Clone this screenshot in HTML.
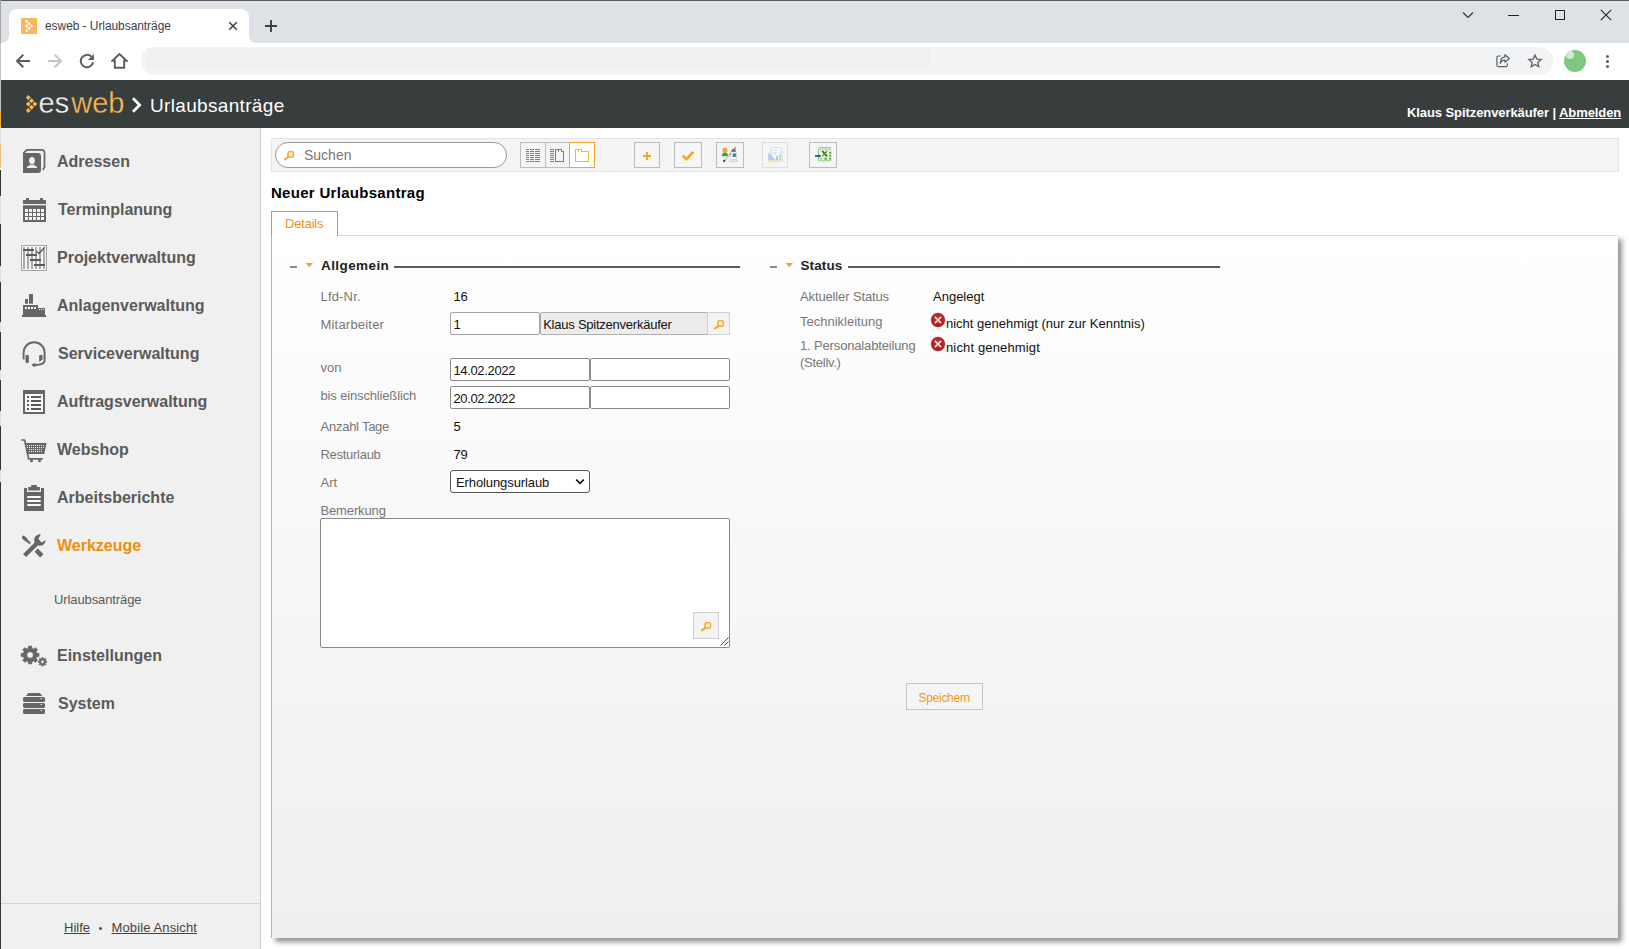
<!DOCTYPE html>
<html lang="de">
<head>
<meta charset="utf-8">
<title>esweb - Urlaubsanträge</title>
<style>
*{box-sizing:border-box;margin:0;padding:0}
html,body{width:1629px;height:949px;overflow:hidden;background:#fff}
body{position:relative;font-family:"Liberation Sans",sans-serif;font-size:13px;color:#111}
.a{position:absolute}
.t{position:absolute;white-space:nowrap;line-height:20px}
/* browser chrome */
#tabstrip{left:0;top:0;width:1629px;height:43px;background:#dee1e6;border-top:1px solid #5a5a5a}
#tab{left:9px;top:9px;width:240px;height:34px;background:#fff;border-radius:8px 8px 0 0}
#navbar{left:0;top:43px;width:1629px;height:37px;background:#fff}
#omni{left:141px;top:47px;width:1412px;height:28px;border-radius:14px;background:#f1f3f4}
/* app header */
#hdr{left:1px;top:80px;width:1628px;height:48px;background:#383d3d}
/* sidebar */
#side{left:1px;top:128px;width:260px;height:821px;background:#f0f0f0;border-right:1px solid #cfcfcf}
.nav{position:absolute;left:57px;font-weight:bold;font-size:16px;color:#5a5a5a;white-space:nowrap;line-height:20px}
.ico{position:absolute}
#sidefoot{left:1px;top:903px;width:259px;height:1px;background:#d2d2d2}
/* main */
#tbar{left:271px;top:138px;width:1348px;height:34px;background:#f4f4f4;border:1px solid #e4e4e4}
#search{left:275px;top:142px;width:232px;height:26px;border:1px solid #9a9a9a;border-radius:13px;background:#fff}
.btn{position:absolute;top:142px;height:26px;border:1px solid #bcbcbc;background:#f5f5f5}
#panel{left:271px;top:235px;width:1347px;height:703px;border:1px solid #dcdcdc;border-left-color:#b4b4b4;border-right:none;border-bottom:none;background:linear-gradient(#ffffff 0%,#fafafa 30%,#f4f4f4 65%,#efefef 100%);box-shadow:4px 4px 5px rgba(0,0,0,.42)}
#dtab{left:271px;top:211px;width:67px;height:25px;border:1px solid #f29400;border-bottom:none;background:#fff}
.lbl{color:#777}
.inp{position:absolute;height:23px;border:1px solid #8a8a8a;background:#fff;border-radius:2px}
.hr{position:absolute;height:2px;background:#5c5c5c;top:266px}
.seg{font-family:"Liberation Sans",sans-serif}
</style>
</head>
<body>
<!-- ===== browser chrome ===== -->
<div id="tabstrip" class="a"></div>
<div id="tab" class="a"></div>
<svg class="a" style="left:1px;top:35px" width="8" height="8" viewBox="0 0 8 8"><path d="M0 8h8V0C8 5 5 8 0 8z" fill="#fff"/></svg>
<svg class="a" style="left:249px;top:35px" width="8" height="8" viewBox="0 0 8 8"><path d="M8 8H0V0c0 5 3 8 8 8z" fill="#fff"/></svg>
<div id="navbar" class="a"></div>
<div id="omni" class="a"></div>
<div class="a" style="left:146px;top:48px;width:784px;height:21px;background:#f0f0f0"></div>
<svg class="a" style="left:21px;top:18px" width="16" height="16" viewBox="0 0 16 16"><rect width="16" height="16" fill="#f8b75a"/><g fill="#fff"><rect x="4.4" y="2.2" width="2.3" height="2.3" transform="rotate(45 5.55 3.35)"/><rect x="4.4" y="6.85" width="2.3" height="2.3" transform="rotate(45 5.55 8)"/><rect x="4.4" y="11.5" width="2.3" height="2.3" transform="rotate(45 5.55 12.65)"/><rect x="6.9" y="4.5" width="2.3" height="2.3" transform="rotate(45 8.05 5.65)"/><rect x="6.9" y="9.2" width="2.3" height="2.3" transform="rotate(45 8.05 10.35)"/><rect x="9.4" y="6.85" width="2.3" height="2.3" transform="rotate(45 10.55 8)"/></g></svg>
<span class="t" id="tabtitle" style="left:45px;top:16px;letter-spacing:-0.07px;font-size:12px;color:#3c4043">esweb - Urlaubsanträge</span>
<svg class="a" style="left:228px;top:21px" width="10" height="10" viewBox="0 0 10 10"><path d="M1.2 1.2L8.8 8.8M8.8 1.2L1.2 8.8" stroke="#3c4043" stroke-width="1.5" fill="none"/></svg>
<svg class="a" style="left:264px;top:19px" width="14" height="14" viewBox="0 0 14 14"><path d="M7 1v12M1 7h12" stroke="#3c4043" stroke-width="1.9" fill="none"/></svg>
<!-- window controls -->
<svg class="a" style="left:1462px;top:10px" width="12" height="10" viewBox="0 0 12 10"><path d="M1 2.5l5 5 5-5" stroke="#333" stroke-width="1.2" fill="none"/></svg>
<div class="a" style="left:1508px;top:15px;width:11px;height:1px;background:#222"></div>
<div class="a" style="left:1555px;top:10px;width:10px;height:10px;border:1px solid #222"></div>
<svg class="a" style="left:1600px;top:9px" width="12" height="12" viewBox="0 0 12 12"><path d="M0.8 0.8L11.2 11.2M11.2 0.8L0.8 11.2" stroke="#222" stroke-width="1.1" fill="none"/></svg>
<!-- nav icons -->
<svg class="a" style="left:15px;top:53px" width="16" height="16" viewBox="0 0 16 16"><path d="M15 8H2.5M8.3 1.7L2 8l6.3 6.3" stroke="#5a5e64" stroke-width="2" fill="none"/></svg>
<svg class="a" style="left:47px;top:53px" width="16" height="16" viewBox="0 0 16 16"><path d="M1 8h12.5M7.7 1.7l6.3 6.3-6.3 6.3" stroke="#c3c5c8" stroke-width="2" fill="none"/></svg>
<svg class="a" style="left:79px;top:53px" width="16" height="16" viewBox="0 0 16 16"><path d="M14.1 9.2A6.2 6.2 0 1 1 12.3 3.6" stroke="#5a5e64" stroke-width="2" fill="none"/><path d="M14.9 0.9v6H8.9z" fill="#5a5e64"/></svg>
<svg class="a" style="left:111px;top:52px" width="17" height="17" viewBox="0 0 17 17"><path d="M8.5 2L1.4 8.7h2.4v7h9.4v-7h2.4z" stroke="#5a5e64" stroke-width="1.9" fill="none" stroke-linejoin="miter"/></svg>
<!-- omnibox right icons -->
<svg class="a" style="left:1495px;top:53px" width="16" height="16" viewBox="0 0 17 17"><path d="M6.2 3.2H3.6a1.6 1.6 0 0 0-1.6 1.6v8a1.6 1.6 0 0 0 1.6 1.6h8a1.6 1.6 0 0 0 1.6-1.6V11" stroke="#5f6368" stroke-width="1.3" fill="none"/><path d="M10.6 1.8l4.6 4-4.6 4V7.5C8 7.5 6.4 8.6 5.6 11 5.6 7 7.6 4.6 10.6 4.2z" stroke="#5f6368" stroke-width="1.3" fill="none" stroke-linejoin="round"/></svg>
<svg class="a" style="left:1527px;top:53px" width="16" height="16" viewBox="0 0 18 18"><path d="M9 2.3l2 4.5 4.9.5-3.7 3.3 1.1 4.8L9 12.9l-4.3 2.5 1.1-4.8L2.1 7.3l4.9-.5z" stroke="#5f6368" stroke-width="1.5" fill="none" stroke-linejoin="miter"/></svg>
<div class="a" style="left:1564px;top:50px;width:22px;height:22px;border-radius:11px;background:#81c784"></div>
<div class="a" style="left:1566px;top:51px;width:8px;height:8px;border-radius:4px;background:#cfe8d0"></div>
<div class="a" style="left:1606px;top:55px;width:3px;height:3px;border-radius:2px;background:#5f6368;box-shadow:0 5px 0 #5f6368,0 10px 0 #5f6368"></div>

<!-- ===== app header ===== -->
<div id="hdr" class="a"></div>
<svg class="a" style="left:24px;top:94px" width="14" height="20" viewBox="0 0 14 20"><g fill="#f9b755"><path d="M1.85 3.5L4.3 1.05L6.75 3.5L4.3 5.95z"/><path d="M1.85 10L4.3 7.55L6.75 10L4.3 12.45z"/><path d="M1.85 16.5L4.3 14.05L6.75 16.5L4.3 18.95z"/><path d="M5.10 6.75L7.55 4.30L10.00 6.75L7.55 9.20z"/><path d="M5.10 13.25L7.55 10.80L10.00 13.25L7.55 15.70z"/><path d="M8.35 10L10.8 7.55L13.25 10L10.8 12.45z"/></g></svg>
<span class="t" id="logo1" style="left:38.6px;top:86px;font-size:29px;line-height:34px;color:#f4f4f4;-webkit-text-stroke:0.3px #383d3d">es</span>
<span class="t" id="logo2" style="left:71.3px;top:86px;font-size:29px;line-height:34px;color:#f9b755;-webkit-text-stroke:0.3px #383d3d">web</span>
<svg class="a" style="left:130px;top:96px" width="14" height="18" viewBox="130 96 14 18"><path d="M133 98.3l6.6 6.7-6.6 6.7" stroke="#fff" stroke-width="2.8" fill="none"/></svg>
<span class="t" id="hdrtitle" style="left:150px;top:94px;font-size:19px;line-height:24px;letter-spacing:0.33px;color:#fff">Urlaubsanträge</span>
<span class="t" id="hdruser" style="left:1407px;top:103px;letter-spacing:-0.085px;font-size:13px;font-weight:bold;color:#fff">Klaus Spitzenverkäufer | <span style="text-decoration:underline">Abmelden</span></span>

<!-- ===== sidebar ===== -->
<div id="side" class="a"></div>
<svg class="a" style="left:16px;top:140px" width="40" height="590" viewBox="16 140 40 590"><path d="M23 153h15a3 3 0 0 1 3 3v14a3 3 0 0 1-3 3H23z" fill="#666"/>
<path d="M23.3 153.4l3.6-3.6h14.6a3 3 0 0 1 3 3v14.4l-1.6 2.6" fill="none" stroke="#666" stroke-width="1.7"/>
<ellipse cx="32" cy="160.6" rx="2.9" ry="3.7" fill="#f0f0f0"/>
<path d="M26.8 168c0-1.4 1.2-2 4-3.3h2.4c2.8 1.3 4 1.9 4 3.3z" fill="#f0f0f0"/>
<path d="M23 200h3v-2h3v2h11v-2h3v2h3v4H23z" fill="#666"/><path d="M23 205.3h23V222H23z" fill="#666"/><rect x="25" y="209" width="3" height="3" fill="#f7f7f7"/><rect x="29" y="209" width="3" height="3" fill="#f7f7f7"/><rect x="33" y="209" width="3" height="3" fill="#f7f7f7"/><rect x="37" y="209" width="3" height="3" fill="#f7f7f7"/><rect x="41" y="209" width="3" height="3" fill="#f7f7f7"/><rect x="25" y="213" width="3" height="3" fill="#f7f7f7"/><rect x="29" y="213" width="3" height="3" fill="#f7f7f7"/><rect x="33" y="213" width="3" height="3" fill="#f7f7f7"/><rect x="37" y="213" width="3" height="3" fill="#f7f7f7"/><rect x="41" y="213" width="3" height="3" fill="#f7f7f7"/><rect x="25" y="217" width="3" height="3" fill="#f7f7f7"/><rect x="29" y="217" width="3" height="3" fill="#f7f7f7"/><rect x="33" y="217" width="3" height="3" fill="#f7f7f7"/><rect x="37" y="217" width="3" height="3" fill="#f7f7f7"/><rect x="41" y="217" width="3" height="3" fill="#f7f7f7"/>
<rect x="21.5" y="245.5" width="25" height="25" fill="#f6f6f6" stroke="#a3a3a3"/><rect x="23" y="247" width="2" height="22" fill="#ababab"/><rect x="27" y="247" width="2" height="22" fill="#ababab"/><rect x="31" y="247" width="2" height="22" fill="#ababab"/><rect x="35" y="247" width="2" height="22" fill="#ababab"/><rect x="39" y="247" width="2" height="22" fill="#ababab"/><rect x="43" y="247" width="2" height="22" fill="#ababab"/><rect x="23" y="249" width="11" height="2" fill="#5a5a5a"/><rect x="26" y="254" width="11" height="2" fill="#5a5a5a"/><rect x="30" y="259" width="11" height="2" fill="#5a5a5a"/><rect x="34" y="264" width="11" height="2" fill="#5a5a5a"/><path d="M36.2 251.2l2.8 2.3 5.6-6" fill="none" stroke="#5a5a5a" stroke-width="1.4"/>
<path d="M22 315h1v-10h15v3h7v7h1v2H22z" fill="#666"/><rect x="25" y="299" width="3" height="4.7" fill="#666"/><rect x="29" y="294" width="4" height="9.7" fill="#666"/><rect x="25" y="307" width="2" height="2" fill="#f7f7f7"/><rect x="28" y="307" width="2" height="2" fill="#f7f7f7"/><rect x="31" y="307" width="2" height="2" fill="#f7f7f7"/><rect x="34" y="307" width="2" height="2" fill="#f7f7f7"/><rect x="39" y="309" width="1" height="1" fill="#f7f7f7"/><rect x="41" y="309" width="1" height="1" fill="#f7f7f7"/><rect x="43" y="309" width="1" height="1" fill="#f7f7f7"/>
<path d="M23.6 358.5v-6a10.5 10.3 0 0 1 21 0v8c0 3-4 4.3-9.5 4.6" fill="none" stroke="#666" stroke-width="1.9" stroke-linecap="round"/>
<rect x="25.6" y="355" width="3.2" height="8" rx="1" fill="#666"/><path d="M39.2 356a1 1 0 0 1 1-1h2.2v4.8l-3.2 2z" fill="#666"/><rect x="42.4" y="355" width="1.4" height="5" fill="#aaa"/><rect x="24.4" y="355" width="1.3" height="5" fill="#aaa"/>
<ellipse cx="34.3" cy="365" rx="2.3" ry="1.7" fill="#666"/>
<path d="M23 390h22v24H23z M25 394v18h18v-18z" fill="#666" fill-rule="evenodd"/><rect x="25" y="394" width="18" height="18" fill="#fafafa"/><rect x="27" y="396" width="2" height="2" fill="#5a5a5a"/><rect x="31" y="396" width="10" height="2" fill="#5a5a5a"/><rect x="27" y="400" width="2" height="2" fill="#5a5a5a"/><rect x="31" y="400" width="10" height="2" fill="#5a5a5a"/><rect x="27" y="404" width="2" height="2" fill="#5a5a5a"/><rect x="31" y="404" width="10" height="2" fill="#5a5a5a"/><rect x="27" y="408" width="2" height="2" fill="#5a5a5a"/><rect x="31" y="408" width="10" height="2" fill="#5a5a5a"/>
<path d="M21.2 440h3.4l4 18.8h14.2" fill="none" stroke="#666" stroke-width="1.7" stroke-linejoin="round"/><path d="M25.6 443h21l-2.4 11H27.8z" fill="#666"/><circle cx="31.5" cy="460.8" r="1.5" fill="#666"/><circle cx="39.5" cy="460.8" r="1.5" fill="#666"/><rect x="26.9" y="445" width="1" height="1" fill="#f5f5f5"/><rect x="28.9" y="445" width="1" height="1" fill="#f5f5f5"/><rect x="30.9" y="445" width="1" height="1" fill="#f5f5f5"/><rect x="32.9" y="445" width="1" height="1" fill="#f5f5f5"/><rect x="34.9" y="445" width="1" height="1" fill="#f5f5f5"/><rect x="36.9" y="445" width="1" height="1" fill="#f5f5f5"/><rect x="38.9" y="445" width="1" height="1" fill="#f5f5f5"/><rect x="40.9" y="445" width="1" height="1" fill="#f5f5f5"/><rect x="42.9" y="445" width="1" height="1" fill="#f5f5f5"/><rect x="26.9" y="447" width="1" height="1" fill="#f5f5f5"/><rect x="28.9" y="447" width="1" height="1" fill="#f5f5f5"/><rect x="30.9" y="447" width="1" height="1" fill="#f5f5f5"/><rect x="32.9" y="447" width="1" height="1" fill="#f5f5f5"/><rect x="34.9" y="447" width="1" height="1" fill="#f5f5f5"/><rect x="36.9" y="447" width="1" height="1" fill="#f5f5f5"/><rect x="38.9" y="447" width="1" height="1" fill="#f5f5f5"/><rect x="40.9" y="447" width="1" height="1" fill="#f5f5f5"/><rect x="42.9" y="447" width="1" height="1" fill="#f5f5f5"/><rect x="28.9" y="449" width="1" height="1" fill="#f5f5f5"/><rect x="30.9" y="449" width="1" height="1" fill="#f5f5f5"/><rect x="32.9" y="449" width="1" height="1" fill="#f5f5f5"/><rect x="34.9" y="449" width="1" height="1" fill="#f5f5f5"/><rect x="36.9" y="449" width="1" height="1" fill="#f5f5f5"/><rect x="38.9" y="449" width="1" height="1" fill="#f5f5f5"/><rect x="40.9" y="449" width="1" height="1" fill="#f5f5f5"/><rect x="28.9" y="451" width="1" height="1" fill="#f5f5f5"/><rect x="30.9" y="451" width="1" height="1" fill="#f5f5f5"/><rect x="32.9" y="451" width="1" height="1" fill="#f5f5f5"/><rect x="34.9" y="451" width="1" height="1" fill="#f5f5f5"/><rect x="36.9" y="451" width="1" height="1" fill="#f5f5f5"/><rect x="38.9" y="451" width="1" height="1" fill="#f5f5f5"/><rect x="40.9" y="451" width="1" height="1" fill="#f5f5f5"/>
<path d="M24 488h3v4h14v-4h3v23H24z" fill="#666"/><path d="M28.2 487h3v-2h5.7v2h3v3.6H28.2z" fill="#666"/><rect x="27.2" y="496" width="13.5" height="2" rx="0.6" fill="#fafafa"/><rect x="27.2" y="500" width="13.5" height="2" rx="0.6" fill="#fafafa"/><rect x="27.2" y="504" width="13.5" height="2" rx="0.6" fill="#fafafa"/>
<path d="M24.6 555.6L36.8 543.4" stroke="#666" stroke-width="4.3" fill="none"/>
<path d="M39.9 534.2a5.8 5.8 0 1 0 5.8 6l-4.2 2.2-3.2-3.6 2.6-4.4z" fill="#666"/>
<path d="M36.2 550.2l5.6 5.6" stroke="#666" stroke-width="4.6" fill="none"/>
<path d="M23.6 537.4l2.3 2.2" stroke="#666" stroke-width="3.4" stroke-linecap="round" fill="none"/><path d="M25.5 539.4l4.6 4" stroke="#666" stroke-width="2.1" fill="none"/>
<path d="M28.25 648.25L28.54 646.04L31.66 646.04L31.95 648.25L33.57 648.92L35.33 647.55L37.55 649.77L36.18 651.53L36.85 653.15L39.06 653.44L39.06 656.56L36.85 656.85L36.18 658.47L37.55 660.23L35.33 662.45L33.57 661.08L31.95 661.75L31.66 663.96L28.54 663.96L28.25 661.75L26.63 661.08L24.87 662.45L22.65 660.23L24.02 658.47L23.35 656.85L21.14 656.56L21.14 653.44L23.35 653.15L24.02 651.53L22.65 649.77L24.87 647.55L26.63 648.92zM26.90 655a3.2 3.2 0 1 0 6.4 0a3.2 3.2 0 1 0 -6.4 0z" fill="#666" fill-rule="evenodd" stroke="#666" stroke-width="0.6" stroke-linejoin="round"/><path d="M41.70 658.60L41.98 657.43L43.02 657.43L43.30 658.60L44.20 658.97L45.22 658.34L45.96 659.08L45.33 660.10L45.70 661.00L46.87 661.28L46.87 662.32L45.70 662.60L45.33 663.50L45.96 664.52L45.22 665.26L44.20 664.63L43.30 665.00L43.02 666.17L41.98 666.17L41.70 665.00L40.80 664.63L39.78 665.26L39.04 664.52L39.67 663.50L39.30 662.60L38.13 662.32L38.13 661.28L39.30 661.00L39.67 660.10L39.04 659.08L39.78 658.34L40.80 658.97zM40.80 661.8a1.7 1.7 0 1 0 3.4 0a1.7 1.7 0 1 0 -3.4 0z" fill="#666" fill-rule="evenodd" stroke="#666" stroke-width="0.6" stroke-linejoin="round"/>
<path d="M28.3 693h11.6l2.4 3H25.9z" fill="#666"/><path d="M24 697h20l1 1v3l-1 1H24l-1-1v-3z" fill="#666"/><rect x="40.6" y="698" width="1.3" height="1" fill="#f7f7f7"/><path d="M24 703h20l1 1v3l-1 1H24l-1-1v-3z" fill="#666"/><rect x="40.6" y="704" width="1.3" height="1" fill="#f7f7f7"/><path d="M24 709h20l1 1v3l-1 1H24l-1-1v-3z" fill="#666"/><rect x="40.6" y="710" width="1.3" height="1" fill="#f7f7f7"/></svg>
<span class="nav" style="top:152px">Adressen</span>
<span class="nav" style="top:200px;left:58px">Terminplanung</span>
<span class="nav" style="top:248px">Projektverwaltung</span>
<span class="nav" style="top:296px">Anlagenverwaltung</span>
<span class="nav" style="top:344px;left:58px">Serviceverwaltung</span>
<span class="nav" style="top:392px">Auftragsverwaltung</span>
<span class="nav" style="top:440px">Webshop</span>
<span class="nav" style="top:488px">Arbeitsberichte</span>
<span class="nav" style="top:536px;color:#ef8e0c">Werkzeuge</span>
<span class="t" id="subitem" style="left:54px;top:590px;letter-spacing:-0.1px;color:#5a5a5a">Urlaubsanträge</span>
<span class="nav" style="top:646px">Einstellungen</span>
<span class="nav" style="top:694px;left:58px">System</span>
<div id="sidefoot" class="a"></div>
<span class="t" id="foot1" style="left:64px;top:918px;color:#444;text-decoration:underline">Hilfe</span><span class="t" style="left:98.5px;top:918px;color:#444;font-size:11px">•</span><span class="t" id="foot2" style="left:111.5px;top:918px;color:#444;letter-spacing:0.12px;text-decoration:underline">Mobile Ansicht</span>

<!-- ===== main ===== -->
<div id="tbar" class="a"></div>
<div id="search" class="a"></div>
<svg class="a" style="left:283px;top:149px" width="12" height="12" viewBox="283 149 12 12"><rect x="287.9" y="151.6" width="5.6" height="5.6" rx="1.9" fill="#fde6c2" stroke="#f8a520" stroke-width="1.3"/><circle cx="290.7" cy="154.4" r="1" fill="#fff8ec"/><path d="M288.2 157l-3.2 2.3" stroke="#f8a520" stroke-width="2.1" stroke-linecap="round"/></svg>
<span class="t" id="suchen" style="left:304px;top:145px;font-size:14px;color:#777">Suchen</span>
<div class="btn" style="left:520px;width:26px"></div>
<div class="btn" style="left:545px;width:25px"></div>
<div class="btn" style="left:569px;width:26px;border-color:#f5a52a;background:#fff"></div>
<div class="btn" style="left:634px;width:26px"></div>
<div class="btn" style="left:674px;width:28px"></div>
<div class="btn" style="left:716px;width:28px"></div>
<div class="btn" style="left:762px;width:26px;border-color:#dedede"></div>
<div class="btn" style="left:809px;width:28px"></div>
<svg class="a" style="left:520px;top:142px" width="320" height="26" viewBox="520 142 320 26">
<g fill="#3d8fd1"><rect x="526" y="149" width="3" height="1"/><rect x="530" y="149" width="4" height="1"/><rect x="535" y="149" width="5" height="1"/><rect x="526" y="151" width="3" height="1"/><rect x="530" y="151" width="4" height="1"/><rect x="535" y="151" width="5" height="1"/><rect x="526" y="153" width="3" height="1"/><rect x="530" y="153" width="4" height="1"/><rect x="535" y="153" width="5" height="1"/><rect x="526" y="155" width="3" height="1"/><rect x="530" y="155" width="4" height="1"/><rect x="535" y="155" width="5" height="1"/><rect x="526" y="157" width="3" height="1"/><rect x="530" y="157" width="4" height="1"/><rect x="535" y="157" width="5" height="1"/><rect x="526" y="159" width="3" height="1"/><rect x="530" y="159" width="4" height="1"/><rect x="535" y="159" width="5" height="1"/><rect x="526" y="161" width="3" height="1"/><rect x="530" y="161" width="4" height="1"/><rect x="535" y="161" width="5" height="1"/><rect x="550" y="149" width="4" height="1"/><rect x="550" y="151" width="4" height="1"/><rect x="550" y="153" width="4" height="1"/><rect x="550" y="155" width="4" height="1"/><rect x="550" y="157" width="4" height="1"/><rect x="550" y="159" width="4" height="1"/><rect x="550" y="161" width="4" height="1"/></g>
<path d="M555.5 149.5H561.5V151.5H563.5V161.5H555.5z M558.5 149.5V152" fill="none" stroke="#3d8fd1" stroke-width="1" shape-rendering="crispEdges"/>
<path d="M575.5 149.5H581.5V151.5H588.5V161.5H575.5z M578.5 149.5V152" fill="none" stroke="#fdb714" stroke-width="1" shape-rendering="crispEdges"/>
<path d="M647 152v8M643 156h8" stroke="#f8a51c" stroke-width="2" fill="none"/>
<path d="M682.6 155.6l3.8 3.6 7-7.4" stroke="#f8a51c" stroke-width="2.6" fill="none"/>
<!-- user / brush / tube -->
<circle cx="725" cy="150" r="2.6" fill="#f4a63a"/><path d="M722 156.2c0-2.6 1.2-3.6 3-3.6s3 1 3 3.6z" fill="#3aa03a"/>
<path d="M735.6 147.4l-6.4 8" stroke="#d9771a" stroke-width="1.6"/><path d="M729.2 155.4l-4.4 5" stroke="#cfcfcf" stroke-width="1.8"/><path d="M724.8 160.2l-1.4 1.4" stroke="#333" stroke-width="1.8"/>
<rect x="731.4" y="149.6" width="4.4" height="2.4" rx="0.8" fill="#3b6fb6"/><rect x="731" y="152" width="5.6" height="7.6" fill="#fdfdfd" stroke="#c8c8c8" stroke-width="0.5"/><rect x="732.6" y="153.4" width="3.6" height="3.6" fill="#4a7fc4"/><rect x="730.2" y="159.8" width="7.4" height="2" rx="0.6" fill="#ededed" stroke="#bdbdbd" stroke-width="0.5"/>
<!-- report faded -->
<g opacity="0.55"><path d="M771.4 147.6h7.8l3 3v10.6h-10.8z" fill="#fbfdff" stroke="#9fb6d6" stroke-width="0.8"/><path d="M773 150.4h4.4M773 152.4h3.6M778.4 152.4h2.4M773 154.4h3.6" stroke="#a9bcd8" stroke-width="0.8"/><rect x="776.2" y="156" width="1.8" height="4.4" fill="#5b9be0"/><rect x="779.2" y="154.2" width="1.8" height="6.2" fill="#7fcf6a"/><path d="M768.2 152v8h7.4z" fill="#8da9e8"/><rect x="768.2" y="160" width="10.4" height="2.4" fill="#e8cf8a"/></g>
<!-- excel -->
<rect x="818.4" y="147.4" width="12.8" height="13.4" fill="#f1f8ec"/>
<path d="M831.2 147.6h-11.2c-1 0-1.6.5-1.6 1.5v11.7h12.8" fill="none" stroke="#86c566" stroke-width="0.9"/>
<rect x="819" y="148.2" width="12.2" height="2.6" fill="#cfdccb"/>
<g fill="#55a338"><rect x="829" y="151.8" width="2.2" height="1.8"/><rect x="829" y="154.8" width="2.2" height="1.8"/><rect x="829" y="157.8" width="2.2" height="1.8"/><rect x="824.4" y="157.8" width="2.8" height="1.8"/></g><rect x="819.6" y="157.8" width="2.8" height="1.8" fill="#9fcf86"/>
<path d="M822.2 151l5 5.4" stroke="#2c6e12" stroke-width="1.8"/><path d="M827 151l-4.6 5.2" stroke="#4f9630" stroke-width="1.3"/>
<path d="M815 156h4" stroke="#2d479a" stroke-width="1.7"/><path d="M818.6 154.2l2.8 1.8-2.8 1.8z" fill="#2d479a"/>
</svg>
<span class="t" id="h1" style="left:271px;top:183.4px;letter-spacing:0.29px;font-size:15px;font-weight:bold;color:#000">Neuer Urlaubsantrag</span>
<div id="panel" class="a"></div>
<div id="dtab" class="a"></div>
<span class="t" id="dtabt" style="left:285px;top:214px;letter-spacing:-0.2px;color:#f0921a">Details</span>
<!-- fieldset: Allgemein -->
<div class="a" style="left:290px;top:266px;width:7px;height:2px;background:#8a8a8a"></div>
<svg class="a" style="left:305px;top:263px" width="9" height="5" viewBox="0 0 9 5"><path d="M0.6 0h7.4L4.3 4.3z" fill="#f7a428"/></svg>
<span class="t" id="leg1" style="letter-spacing:0.41px;left:321px;top:256px;font-size:13.5px;font-weight:bold;color:#222">Allgemein</span>
<div class="hr" style="left:394px;width:346px"></div>
<span class="t lbl" style="letter-spacing:0.17px;left:320.5px;top:287px">Lfd-Nr.</span>
<span class="t" style="letter-spacing:-0.3px;left:453.5px;top:287px">16</span>
<span class="t lbl" style="letter-spacing:0.2px;left:320.5px;top:315px">Mitarbeiter</span>
<div class="inp" style="left:450px;top:312px;width:90px;border-color:#a2a2a2"></div>
<span class="t" style="left:453.5px;top:315px">1</span>
<div class="inp" style="left:540px;top:312px;width:168px;background:#ececec;border-color:#b0b0b0"></div>
<span class="t" style="letter-spacing:-0.24px;left:543.2px;top:315px">Klaus Spitzenverkäufer</span>
<div class="a" style="left:707px;top:312px;width:23px;height:23px;border:1px solid #d0d0d0;background:#f3f3f3"></div>
<svg class="a" style="left:712.6px;top:318.3px" width="12" height="12" viewBox="283 149 12 12"><rect x="287.9" y="151.6" width="5.6" height="5.6" rx="1.9" fill="#fde6c2" stroke="#f8a520" stroke-width="1.3"/><circle cx="290.7" cy="154.4" r="1" fill="#fff8ec"/><path d="M288.2 157l-3.2 2.3" stroke="#f8a520" stroke-width="2.1" stroke-linecap="round"/></svg>
<span class="t lbl" style="left:320.5px;top:358px">von</span>
<div class="inp" style="left:450px;top:358px;width:140px"></div>
<span class="t" style="letter-spacing:-0.34px;left:453.4px;top:361px">14.02.2022</span>
<div class="inp" style="left:590px;top:358px;width:140px"></div>
<span class="t lbl" style="letter-spacing:-0.15px;left:320.5px;top:386px">bis einschließlich</span>
<div class="inp" style="left:450px;top:386px;width:140px"></div>
<span class="t" style="letter-spacing:-0.34px;left:453.4px;top:389px">20.02.2022</span>
<div class="inp" style="left:590px;top:386px;width:140px"></div>
<span class="t lbl" style="letter-spacing:-0.25px;left:320.5px;top:417px">Anzahl Tage</span>
<span class="t" style="left:453.5px;top:417px">5</span>
<span class="t lbl" style="letter-spacing:-0.28px;left:320.5px;top:445px">Resturlaub</span>
<span class="t" style="letter-spacing:-0.3px;left:453.5px;top:445px">79</span>
<span class="t lbl" style="left:320.5px;top:473px">Art</span>
<div class="inp" style="left:450px;top:470px;width:140px;border-color:#555;border-radius:3px"></div>
<span class="t" style="letter-spacing:-0.1px;left:456px;top:473px">Erholungsurlaub</span>
<svg class="a" style="left:575px;top:477.5px" width="10" height="8" viewBox="0 0 10 8"><path d="M1.2 1.6l3.8 3.8 3.8-3.8" stroke="#111" stroke-width="1.7" fill="none"/></svg>
<span class="t lbl" style="letter-spacing:-0.14px;left:320.5px;top:501px">Bemerkung</span>
<div class="inp" style="left:320px;top:518px;width:410px;height:130px"></div>
<div class="a" style="left:693px;top:612px;width:26px;height:27px;border:1px solid #cfcfcf;background:#f3f3f3"></div>
<svg class="a" style="left:700px;top:620px" width="12" height="12" viewBox="283 149 12 12"><rect x="287.9" y="151.6" width="5.6" height="5.6" rx="1.9" fill="#fde6c2" stroke="#f8a520" stroke-width="1.3"/><circle cx="290.7" cy="154.4" r="1" fill="#fff8ec"/><path d="M288.2 157l-3.2 2.3" stroke="#f8a520" stroke-width="2.1" stroke-linecap="round"/></svg>
<svg class="a" style="left:720px;top:637px" width="9" height="9" viewBox="0 0 9 9"><path d="M0.5 8.5l8-8M4.5 8.5l4-4" stroke="#444" stroke-width="1"/></svg>
<!-- fieldset: Status -->
<div class="a" style="left:770px;top:266px;width:7px;height:2px;background:#8a8a8a"></div>
<svg class="a" style="left:785px;top:263px" width="9" height="5" viewBox="0 0 9 5"><path d="M0.6 0h7.4L4.3 4.3z" fill="#f7a428"/></svg>
<span class="t" id="leg2" style="letter-spacing:0.1px;left:800.5px;top:256px;font-size:13.5px;font-weight:bold;color:#222">Status</span>
<div class="hr" style="left:847.5px;width:372.5px"></div>
<span class="t lbl" style="letter-spacing:-0.13px;left:800px;top:287px">Aktueller Status</span>
<span class="t" style="left:933px;top:287px">Angelegt</span>
<span class="t lbl" style="left:800px;top:312px">Technikleitung</span>
<span class="t" style="left:946px;top:314px">nicht genehmigt (nur zur Kenntnis)</span>
<span class="t lbl" style="letter-spacing:-0.15px;left:800px;top:336px">1. Personalabteilung</span>
<span class="t lbl" style="letter-spacing:-0.27px;left:800px;top:353px">(Stellv.)</span>
<span class="t" style="letter-spacing:0.14px;left:946px;top:338px">nicht genehmigt</span>
<svg class="a" width="0" height="0" style="left:0;top:0"><defs><radialGradient id="rg" cx="0.45" cy="0.35" r="0.75"><stop offset="0" stop-color="#c92a2a"/><stop offset="0.7" stop-color="#b31f1f"/><stop offset="1" stop-color="#8c1717"/></radialGradient></defs></svg><svg class="a" style="left:929.8px;top:311.8px" width="16" height="16" viewBox="0 0 16 16"><circle cx="8" cy="8" r="6.9" fill="url(#rg)" stroke="#9c1c1c" stroke-width="0.5"/><path d="M4.9 4.9l6.2 6.2M11.1 4.9l-6.2 6.2" stroke="#fbeaea" stroke-width="1.5"/></svg>
<svg class="a" style="left:929.8px;top:335.8px" width="16" height="16" viewBox="0 0 16 16"><circle cx="8" cy="8" r="6.9" fill="url(#rg)" stroke="#9c1c1c" stroke-width="0.5"/><path d="M4.9 4.9l6.2 6.2M11.1 4.9l-6.2 6.2" stroke="#fbeaea" stroke-width="1.5"/></svg>
<div class="a" style="left:906px;top:683px;width:77px;height:27px;border:1px solid #c4c4c4;background:#f5f5f5"></div>
<span class="t" id="save" style="left:918.5px;top:688px;letter-spacing:-0.28px;font-size:12px;color:#f39a16">Speichern</span>

<div class="a" style="left:0;top:0px;width:1px;height:43px;background:#a8a8a8"></div><div class="a" style="left:0;top:43px;width:1px;height:68px;background:#c2c2c2"></div><div class="a" style="left:0;top:111px;width:1px;height:16px;background:#f5a83a"></div><div class="a" style="left:0;top:127px;width:1px;height:17px;background:#ddd"></div><div class="a" style="left:0;top:144px;width:1px;height:24px;background:#f0c27a"></div><div class="a" style="left:0;top:170px;width:1px;height:26px;background:#333"></div><div class="a" style="left:0;top:196px;width:1px;height:28px;background:#ddd"></div><div class="a" style="left:0;top:224px;width:1px;height:42px;background:#333"></div><div class="a" style="left:0;top:266px;width:1px;height:16px;background:#ddd"></div><div class="a" style="left:0;top:282px;width:1px;height:40px;background:#333"></div><div class="a" style="left:0;top:322px;width:1px;height:10px;background:#ddd"></div><div class="a" style="left:0;top:332px;width:1px;height:38px;background:#333"></div><div class="a" style="left:0;top:370px;width:1px;height:10px;background:#ddd"></div><div class="a" style="left:0;top:380px;width:1px;height:31px;background:#333"></div><div class="a" style="left:0;top:411px;width:1px;height:15px;background:#ddd"></div><div class="a" style="left:0;top:426px;width:1px;height:44px;background:#333"></div><div class="a" style="left:0;top:470px;width:1px;height:12px;background:#ddd"></div><div class="a" style="left:0;top:482px;width:1px;height:467px;background:#3a3a3a"></div>
</body>
</html>
